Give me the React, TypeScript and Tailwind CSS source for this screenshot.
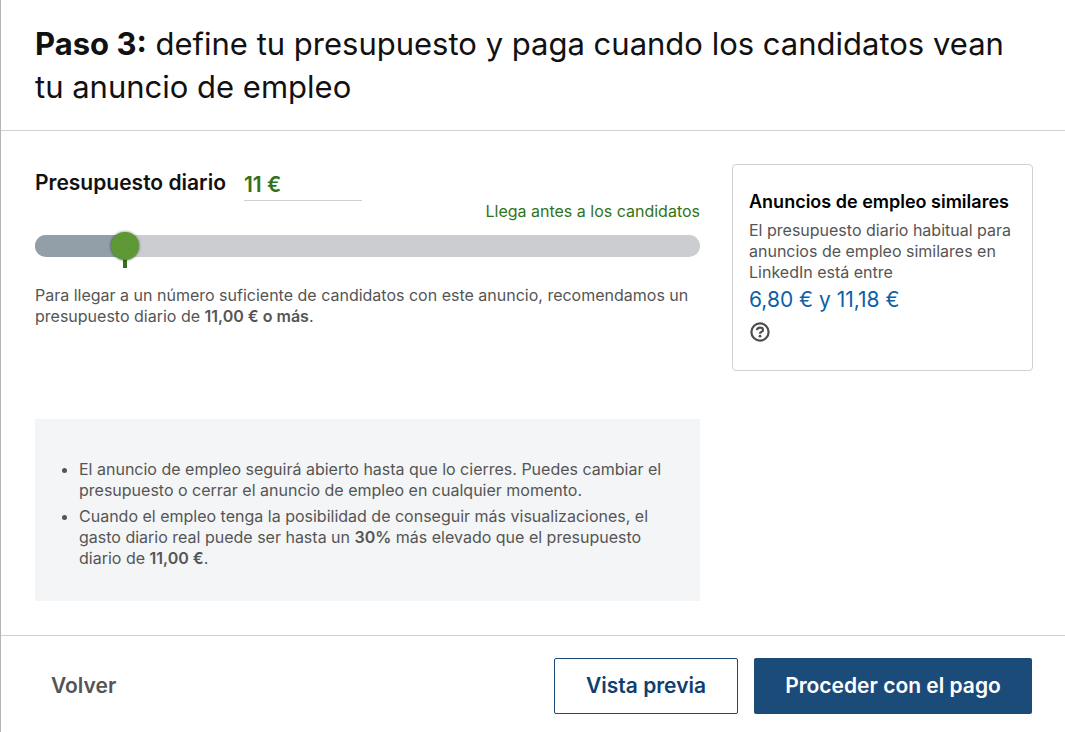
import React, { useState } from "react";

const MIN_BUDGET = 5;
const MAX_BUDGET = 55;

const formatEuro = (value: number) => `${value.toFixed(2).replace(".", ",")} €`;

const Header = () => (
  <header className="border-b border-[#d0d0d0] px-[34px] py-[22px]">
    <h1 className="text-[31px] leading-[43px] text-[#111]">
      <strong className="font-bold">Paso 3:</strong> define tu presupuesto y
      paga cuando los candidatos vean tu anuncio de empleo
    </h1>
  </header>
);

type SliderProps = {
  value: number;
  onChange: (value: number) => void;
};

const BudgetSlider = ({ value, onChange }: SliderProps) => {
  const percent = ((value - MIN_BUDGET) / (MAX_BUDGET - MIN_BUDGET)) * 100;

  return (
    <div className="relative h-[22px] rounded-full bg-[#cccdd1]">
      {/* Filled part and pin, both aligned to the thumb centre */}
      <div className="absolute inset-0 rounded-full pr-7">
        <div
          className="box-content h-full rounded-l-full bg-[#929fa9] pl-3.5"
          style={{ width: `${percent}%` }}
        />
      </div>
      <div className="absolute inset-x-3.5 top-0 h-[33px]">
        <div
          className="relative h-full w-1 bg-[#32731a]"
          style={{ left: `calc(${percent}% - 2px)` }}
        />
      </div>
      <input
        type="range"
        aria-label="Presupuesto diario"
        min={MIN_BUDGET}
        max={MAX_BUDGET}
        value={value}
        onChange={(e) => onChange(Number(e.target.value))}
        className="absolute inset-0 h-full w-full cursor-pointer appearance-none bg-transparent [&::-webkit-slider-thumb]:size-7 [&::-webkit-slider-thumb]:appearance-none [&::-webkit-slider-thumb]:rounded-full [&::-webkit-slider-thumb]:bg-[#5d9835] [&::-webkit-slider-thumb]:shadow-[0_0_3px_rgba(0,0,0,0.6)]"
      />
    </div>
  );
};

const SimilarJobs = () => (
  <aside className="w-[301px] shrink-0 self-start rounded border border-[#d0d0d0] px-4 pt-[23px] pb-[27px]">
    <h2 className="text-lg leading-7 font-semibold whitespace-nowrap text-black">
      Anuncios de empleo similares
    </h2>
    <p className="mt-1 text-base leading-[21px] text-[#555]">
      El presupuesto diario habitual para anuncios de empleo similares en
      LinkedIn está entre
    </p>
    <p className="mt-[3px] text-[21px] leading-7 text-[#0d5fa6]">
      6,80 € y 11,18 €
    </p>
    <button
      type="button"
      aria-label="Ayuda"
      className="mt-[7px] block cursor-pointer text-[#4d4d4d]"
    >
      <svg viewBox="0 0 24 24" fill="none" className="size-[22px]">
        <circle cx="12" cy="12" r="9.4" stroke="currentColor" strokeWidth="2.4" />
        <path
          d="M8.7 10c.1-1.9 1.4-2.8 3.3-2.8s3.3.9 3.3 2.5c0 1.2-.8 1.8-1.7 2.2-.9.5-1.6.8-1.6 1.7v.4"
          stroke="currentColor"
          strokeWidth="2.3"
        />
        <circle cx="12" cy="16.6" r="1.5" fill="currentColor" />
      </svg>
    </button>
  </aside>
);

const Footer = () => (
  <footer className="flex items-center justify-between border-t border-[#d0d0d0] pt-[22px] pr-[33px] pb-[18px] pl-[34px] text-[21px] leading-7 font-semibold">
    <button type="button" className="cursor-pointer px-4 text-[#555]">
      Volver
    </button>
    <div className="flex gap-4">
      <button
        type="button"
        className="h-14 w-[184px] cursor-pointer rounded-xs border border-[#1b4b79] text-[#0f3f70]"
      >
        Vista previa
      </button>
      <button
        type="button"
        className="h-14 w-[278px] cursor-pointer rounded-xs bg-[#1b4b79] text-white"
      >
        Proceder con el pago
      </button>
    </div>
  </footer>
);

const App = () => {
  const [budget, setBudget] = useState(11);

  return (
    <div className="flex min-h-screen flex-col border-l border-[#b5b5b5] bg-white font-[Inter,sans-serif]">
      <Header />
      <main className="flex grow gap-8 px-8 py-[33px] pl-[34px]">
        <section className="min-w-0 grow">
          <div className="flex items-start gap-[18px]">
            <label
              htmlFor="budget"
              className="pt-[5px] text-[21px] leading-7 font-semibold text-[#111]"
            >
              Presupuesto diario
            </label>
            <input
              id="budget"
              type="text"
              value={`${budget} €`}
              onChange={(e) => {
                const next = parseInt(e.target.value, 10) || MIN_BUDGET;
                setBudget(Math.min(MAX_BUDGET, Math.max(MIN_BUDGET, next)));
              }}
              className="h-[37px] w-[118px] border-b border-[#d0d0d0] pt-1 text-[21px] font-semibold text-[#32731a] outline-none"
            />
          </div>
          <p className="mb-[13px] text-right text-base leading-[21px] text-[#32731a]">
            Llega antes a los candidatos
          </p>
          <BudgetSlider value={budget} onChange={setBudget} />
          <p className="mt-7 text-base leading-[21px] text-[#555]">
            Para llegar a un número suficiente de candidatos con este anuncio,
            recomendamos un presupuesto diario de{" "}
            <strong className="font-semibold">11,00 € o más</strong>.
          </p>
          <ul className="mt-[92px] list-disc space-y-[5px] bg-[#f3f5f7] pt-10 pr-8 pb-8 pl-11 text-base leading-[21px] text-[#555]">
            <li>
              El anuncio de empleo seguirá abierto hasta que lo cierres. Puedes
              cambiar el presupuesto o cerrar el anuncio de empleo en cualquier
              momento.
            </li>
            <li>
              Cuando el empleo tenga la posibilidad de conseguir más
              visualizaciones, el gasto diario real puede ser hasta un{" "}
              <strong className="font-semibold">30%</strong> más elevado que el
              presupuesto diario de{" "}
              <strong className="font-semibold">{formatEuro(budget)}</strong>.
            </li>
          </ul>
        </section>
        <SimilarJobs />
      </main>
      <Footer />
    </div>
  );
};

export default App;
